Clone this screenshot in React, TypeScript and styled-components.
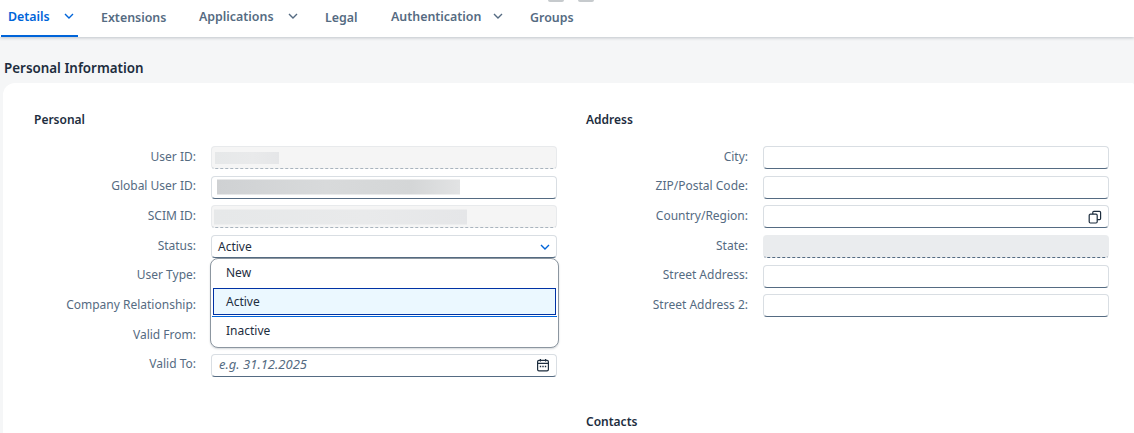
import React from "react";
import styled, { createGlobalStyle } from "styled-components";

const Global = createGlobalStyle`
  html, body { margin: 0; padding: 0; height: 100%; overflow: hidden; }
  body { background: #f5f6f7; font-family: "Noto Sans", "Open Sans", sans-serif; }
  * { box-sizing: border-box; }
`;

const Page = styled.div`
  position: relative;
  width: 1134px;
  height: 433px;
  overflow: hidden;
  background: #f5f6f7;
`;

const TabBar = styled.nav`
  display: flex;
  align-items: stretch;
  height: 37px;
  padding-left: 1px;
  background: #fff;
  box-shadow: 0 1px 3px rgba(34, 53, 72, 0.25);
`;

const Tab = styled.div<{ $active?: boolean; $w: number; $mr?: number; $lift?: boolean; $gap?: number }>`
  display: flex;
  align-items: center;
  gap: ${(p) => p.$gap ?? 14}px;
  width: ${(p) => p.$w}px;
  margin-right: ${(p) => p.$mr || 0}px;
  padding: ${(p) => (p.$lift ? "0 0 3px 7px" : "0 0 1px 7px")};
  font-size: 12.4px;
  font-weight: 600;
  color: ${(p) => (p.$active ? "#0064d9" : "#556b82")};
  border-bottom: 2px solid ${(p) => (p.$active ? "#0064d9" : "transparent")};
  height: 37px;
  white-space: nowrap;
`;

const Chevron = styled.svg<{ $color?: string }>`
  width: 10px;
  height: 10px;
  fill: none;
  stroke: ${(p) => p.$color || "#556b82"};
  stroke-width: 1.4;
  flex: none;
`;

const SectionTitle = styled.h2`
  margin: 0;
  height: 46px;
  padding: 22px 0 0 4px;
  font-size: 13.4px;
  line-height: 18px;
  font-weight: 600;
  color: #1d2d3e;
`;

const Card = styled.main`
  margin-left: 3px;
  height: 400px;
  padding: 28px 0 0 31px;
  background: #fff;
  border-radius: 12px 2px 0 0;
  display: grid;
  grid-template-columns: 552px 516px;
`;

const Column = styled.section`
  position: relative;
`;

const GroupTitle = styled.h3<{ $top?: number }>`
  margin: ${(p) => p.$top || 0}px 0 17px;
  height: 18px;
  font-size: 12px;
  line-height: 18px;
  font-weight: 600;
  color: #1d2d3e;
`;

const Row = styled.div`
  display: grid;
  grid-template-columns: 162px 346px;
  column-gap: 15px;
  align-items: center;
  height: 29.7px;
  padding-bottom: 6.7px;
`;

const Label = styled.label`
  font-size: 12px;
  line-height: 16px;
  text-align: right;
  color: #556b82;
  white-space: nowrap;
  margin-top: -2px;
`;

const Field = styled.div<{ $kind?: "input" | "readonly" | "disabled" }>`
  position: relative;
  display: flex;
  align-items: center;
  justify-content: space-between;
  height: 23px;
  padding: 0 6px 0 6px;
  font-size: 12px;
  color: #1d2d3e;
  border-radius: 4px;
  background: ${(p) =>
    p.$kind === "readonly" ? "#f5f5f5" : p.$kind === "disabled" ? "#eaecee" : "#fff"};
  border: 1px solid ${(p) => (p.$kind === "disabled" ? "#eaecee" : p.$kind === "readonly" ? "#e8eaec" : "#d9dee3")};
  border-bottom: 1px ${(p) => (p.$kind === "readonly" || p.$kind === "disabled" ? "dashed" : "solid")}
    ${(p) => (p.$kind === "disabled" ? "#556b82" : p.$kind === "readonly" ? "#a9b4be" : "#556b82")};
`;

const Blur = styled.div<{ $w: number; $h: number; $x: number; $dark?: boolean }>`
  position: absolute;
  left: ${(p) => p.$x}px;
  top: 50%;
  transform: translateY(-50%);
  width: ${(p) => p.$w}px;
  height: ${(p) => p.$h}px;
  background: ${(p) =>
    p.$dark
      ? "linear-gradient(90deg, #cfd1d3, #d8dadb 45%, #d4d6d7 80%, #e2e3e4)"
      : "linear-gradient(90deg, #e6e8e9, #e9eaeb 60%, #e5e6e8)"};
  filter: blur(0.4px);
`;

const Placeholder = styled.span`
  font-size: 13px;
  line-height: 16px;
  font-style: italic;
  color: #556b82;
  margin: -2px 0 0 1px;
`;

const IconSvg = styled.svg`
  width: 14px;
  height: 14px;
  fill: none;
  stroke: #1d2d3e;
  stroke-width: 1.2;
  flex: none;
`;

const Dropdown = styled.ul`
  position: absolute;
  left: 176px;
  top: 147px;
  width: 349px;
  height: 90px;
  margin: 0;
  padding: 0 2px;
  list-style: none;
  background: #fff;
  border: 1px solid #8c96a0;
  border-radius: 8px;
  box-shadow: 0 1px 2px rgba(34, 53, 72, 0.2);
`;

const Option = styled.li<{ $selected?: boolean }>`
  display: flex;
  align-items: center;
  height: ${(p) => (p.$selected ? "27px" : "29px")};
  margin-bottom: ${(p) => (p.$selected ? "1px" : "0")};
  padding: 0 0 ${(p) => (p.$selected ? "0" : "2px")} 13px;
  font-size: 12px;
  color: #1d2d3e;
  background: ${(p) => (p.$selected ? "#ebf8ff" : "transparent")};
  outline: ${(p) => (p.$selected ? "1px solid #0032a5" : "none")};
  outline-offset: -1px;
`;

const OptionRule = styled.div`
  height: 1px;
  margin: 0 -1px;
  background: #0064d9;
`;

const Remnant = styled.div<{ $x: number }>`
  position: absolute;
  top: 0;
  left: ${(p) => p.$x}px;
  width: 16px;
  height: 2px;
  background: #c6cacd;
  border-radius: 0 0 4px 4px;
  filter: blur(0.5px);
`;

const Down = ({ color }: { color?: string }) => (
  <Chevron viewBox="0 0 10 10" $color={color}>
    <path d="M1 3l4 4 4-4" />
  </Chevron>
);

const CalendarIcon = () => (
  <IconSvg viewBox="0 0 14 14">
    <rect x="1.6" y="2.4" width="10.8" height="10.4" rx="1.4" />
    <path d="M1.6 5.4h10.8M4.4 1v2.6M9.6 1v2.6" />
    <path d="M3.8 8.6h1.4M6.3 8.6h1.4M8.8 8.6h1.4" strokeWidth="1.5" />
  </IconSvg>
);

const CopyIcon = () => (
  <IconSvg viewBox="0 0 14 14">
    <rect x="1.2" y="4.2" width="8" height="8.8" rx="1.2" />
    <path d="M4.8 4.2V2.4a1.1 1.1 0 0 1 1.1-1.1h5.6a1.1 1.1 0 0 1 1.1 1.1v6.2a1.1 1.1 0 0 1-1.1 1.1H9.2" />
  </IconSvg>
);

const tabs = [
  { label: "Details", w: 77, mr: 16, active: true, chevron: true, lift: true },
  { label: "Extensions", w: 98 },
  { label: "Applications", w: 126, chevron: true, lift: true },
  { label: "Legal", w: 66 },
  { label: "Authentication", w: 139, chevron: true, lift: true, gap: 12 },
  { label: "Groups", w: 70 },
];

export default function App() {
  return (
    <Page>
      <Global />
      <TabBar>
        {tabs.map((t) => (
          <Tab key={t.label} $active={t.active} $w={t.w} $mr={t.mr} $lift={t.lift} $gap={t.gap}>
            {t.label}
            {t.chevron && <Down color={t.active ? "#0064d9" : undefined} />}
          </Tab>
        ))}
      </TabBar>
      <Remnant $x={548} />
      <Remnant $x={578} />
      <SectionTitle>Personal Information</SectionTitle>
      <Card>
        <Column>
          <GroupTitle>Personal</GroupTitle>
          <Row>
            <Label>User ID:</Label>
            <Field $kind="readonly"><Blur $x={3} $w={64} $h={12} /></Field>
          </Row>
          <Row>
            <Label>Global User ID:</Label>
            <Field><Blur $x={5} $w={243} $h={15} $dark /></Field>
          </Row>
          <Row>
            <Label>SCIM ID:</Label>
            <Field $kind="readonly"><Blur $x={2} $w={253} $h={15} /></Field>
          </Row>
          <Row>
            <Label>Status:</Label>
            <Field>Active<Down color="#0064d9" /></Field>
          </Row>
          <Row><Label>User Type:</Label></Row>
          <Row><Label>Company Relationship:</Label></Row>
          <Row><Label>Valid From:</Label></Row>
          <Row>
            <Label>Valid To:</Label>
            <Field><Placeholder>e.g. 31.12.2025</Placeholder><CalendarIcon /></Field>
          </Row>
          <Dropdown>
            <Option>New</Option>
            <Option $selected>Active</Option>
            <OptionRule />
            <Option $selected={false}>Inactive</Option>
          </Dropdown>
        </Column>
        <Column>
          <GroupTitle>Address</GroupTitle>
          <Row><Label>City:</Label><Field /></Row>
          <Row><Label>ZIP/Postal Code:</Label><Field /></Row>
          <Row><Label>Country/Region:</Label><Field><span /><CopyIcon /></Field></Row>
          <Row><Label>State:</Label><Field $kind="disabled" /></Row>
          <Row><Label>Street Address:</Label><Field /></Row>
          <Row><Label>Street Address 2:</Label><Field /></Row>
          <GroupTitle $top={89}>Contacts</GroupTitle>
        </Column>
      </Card>
    </Page>
  );
}
